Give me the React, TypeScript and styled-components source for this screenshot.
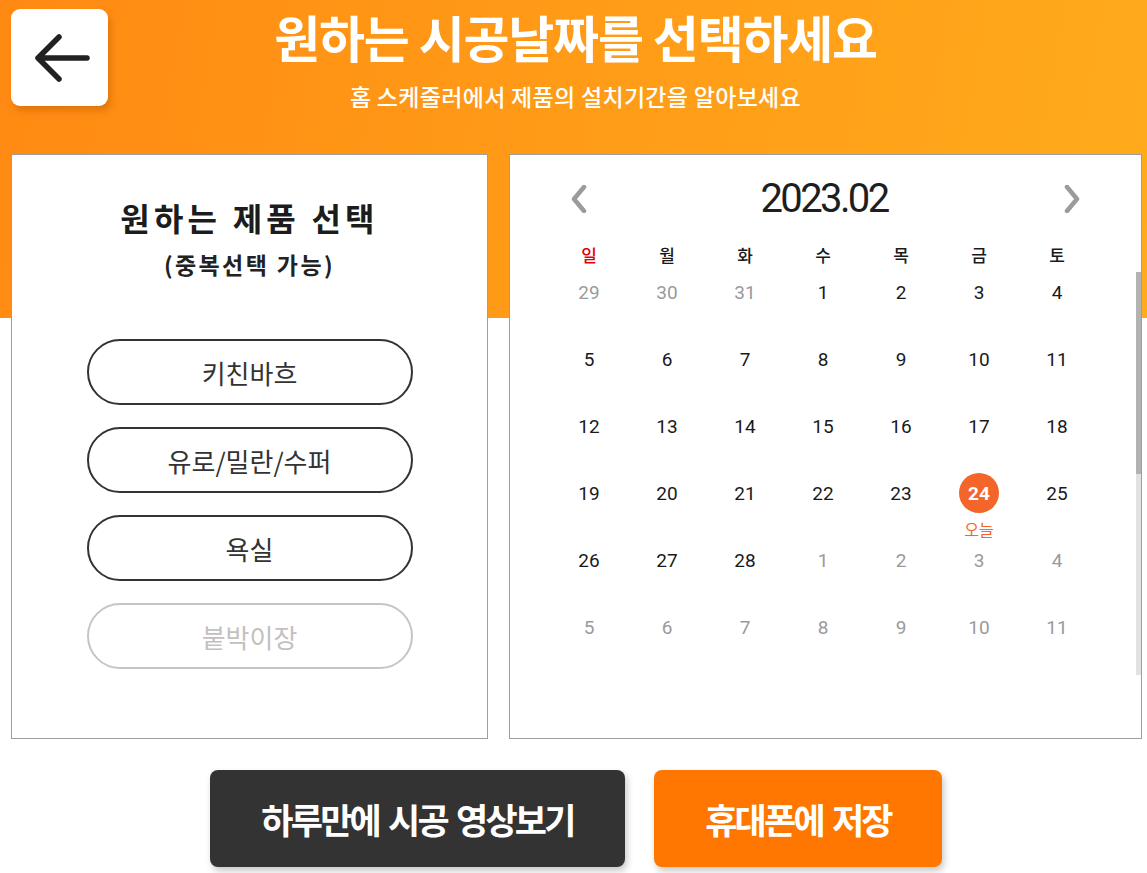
import React from "react";
import styled, { createGlobalStyle } from "styled-components";

const Global = createGlobalStyle`
  html, body { margin: 0; padding: 0; background: #fff; }
  body { font-family: "Noto Sans CJK KR", "Noto Sans", sans-serif; }
  * { box-sizing: border-box; }
`;

const Page = styled.div`
  width: 1147px;
  height: 873px;
  overflow: hidden;
  padding: 0 7px 0 11px;
  background: linear-gradient(100deg, #ff8a13 0%, #ff9a17 45%, #ffab1c 100%) top left / 100% 318px no-repeat, #fff;
  display: flex;
  flex-direction: column;
`;

const Header = styled.header`
  display: grid;
  grid-template-columns: 97px 1fr 97px;
  height: 154px;
  align-items: start;
`;

const BackButton = styled.button`
  margin-top: 9px;
  width: 97px;
  height: 97px;
  border: none;
  border-radius: 9px;
  background: #fff;
  box-shadow: 3px 5px 7px rgba(190, 90, 0, 0.45);
  display: flex;
  align-items: center;
  justify-content: center;
  padding: 0;
  cursor: pointer;
`;

const Titles = styled.div`
  display: flex;
  flex-direction: column;
  align-items: center;
  color: #fff;
`;

const Title = styled.h1`
  margin: 0;
  font-size: 50px;
  line-height: 72px;
  font-weight: 700;
  letter-spacing: -1.2px;
  white-space: nowrap;
`;

const Subtitle = styled.p`
  margin: 9px 0 0;
  font-size: 23px;
  line-height: 30px;
  font-weight: 500;
  letter-spacing: 0.3px;
`;

const Panels = styled.div`
  display: grid;
  grid-template-columns: 477px 633px;
  gap: 21px;
  height: 585px;
`;

const Panel = styled.section`
  position: relative;
  background: #fff;
  border: 1px solid #9e9e9e;
  display: flex;
  flex-direction: column;
  align-items: center;
  overflow: hidden;
`;

const ProductPanel = styled(Panel)`
  padding-top: 40px;
`;

const PanelTitle = styled.h2`
  margin: 0;
  font-size: 32px;
  line-height: 44px;
  font-weight: 700;
  letter-spacing: 4.2px;
  color: #1c1c1c;
`;

const PanelNote = styled.p`
  margin: 10px 0 0;
  font-size: 23px;
  line-height: 30px;
  font-weight: 700;
  letter-spacing: 2.4px;
  color: #222;
`;

const ProductList = styled.div`
  margin-top: 60px;
  display: flex;
  flex-direction: column;
  gap: 22px;
`;

const ProductButton = styled.button<{ $disabled?: boolean }>`
  width: 326px;
  height: 66px;
  border-radius: 33px;
  border: 2px solid ${(p) => (p.$disabled ? "#c9c4c4" : "#333")};
  background: #fff;
  color: ${(p) => (p.$disabled ? "#c4c0c0" : "#333")};
  font-family: "Noto Sans CJK KR", sans-serif;
  font-size: 26px;
  font-weight: 400;
  padding: 0;
  cursor: pointer;
`;

const CalendarPanel = styled(Panel)`
  padding-top: 20px;
  align-items: stretch;
`;

const CalHeader = styled.div`
  height: 48px;
  display: flex;
  align-items: center;
  justify-content: space-between;
  padding: 0 60px;
`;

const NavButton = styled.button`
  width: 18px;
  height: 30px;
  border: none;
  background: none;
  padding: 0;
  display: flex;
  align-items: center;
  justify-content: center;
  cursor: pointer;
`;

const MonthLabel = styled.div`
  font-family: Roboto, "Noto Sans CJK KR", sans-serif;
  font-size: 40px;
  line-height: 48px;
  font-weight: 400;
  letter-spacing: -2.6px;
  color: #1e1e1e;
  margin-right: 3px;
`;

const WeekRow = styled.div`
  margin-top: 13px;
  height: 36px;
  display: grid;
  grid-template-columns: repeat(7, 78px);
  justify-content: center;
  padding-right: 5px;
`;

const WeekDay = styled.div<{ $sun?: boolean }>`
  display: flex;
  align-items: center;
  justify-content: center;
  font-size: 17px;
  font-weight: 500;
  color: ${(p) => (p.$sun ? "#e0000b" : "#1a1a1a")};
`;

const DaysArea = styled.div`
  height: 403px;
  overflow: hidden;
`;

const DaysGrid = styled.div`
  display: grid;
  grid-template-columns: repeat(7, 78px);
  grid-auto-rows: 67px;
  justify-content: center;
  padding-right: 5px;
`;

const ScrollTrack = styled.div`
  position: absolute;
  top: 117px;
  right: 0;
  width: 5px;
  height: 403px;
  background: #e2e2e2;
`;

const ScrollThumb = styled.div`
  width: 100%;
  height: 50%;
  background: #b3b3b3;
`;

const DayCell = styled.div`
  display: flex;
  flex-direction: column;
  align-items: center;
`;

const DayNum = styled.div<{ $muted?: boolean; $today?: boolean }>`
  width: 40px;
  height: 40px;
  border-radius: 50%;
  display: flex;
  align-items: center;
  justify-content: center;
  font-family: Roboto, "Noto Sans CJK KR", sans-serif;
  font-size: 19px;
  font-weight: ${(p) => (p.$today ? 700 : 400)};
  color: ${(p) => (p.$today ? "#fff" : p.$muted ? "#9a9a9a" : "#1a1a1a")};
  background: ${(p) => (p.$today ? "#f4652a" : "transparent")};
`;

const TodayLabel = styled.div`
  margin-top: 6px;
  font-size: 16px;
  line-height: 20px;
  color: #f4652a;
`;

const Actions = styled.div`
  margin-top: 31px;
  display: flex;
  justify-content: center;
  gap: 29px;
  padding-left: 1px;
`;

const ActionButton = styled.button<{ $w: number; $bg: string }>`
  width: ${(p) => p.$w}px;
  height: 97px;
  border: none;
  border-radius: 8px;
  background: ${(p) => p.$bg};
  color: #fff;
  font-family: "Noto Sans CJK KR", sans-serif;
  font-size: 35px;
  font-weight: 700;
  letter-spacing: -2.8px;
  word-spacing: 4px;
  box-shadow: 2px 4px 7px rgba(0, 0, 0, 0.22);
  cursor: pointer;
  padding: 0;
`;

type Day = { n: number; muted?: boolean; today?: boolean };

const days: Day[] = [
  { n: 29, muted: true }, { n: 30, muted: true }, { n: 31, muted: true },
  ...Array.from({ length: 28 }, (_, i) => ({ n: i + 1, today: i + 1 === 24 })),
  { n: 1, muted: true }, { n: 2, muted: true }, { n: 3, muted: true }, { n: 4, muted: true },
  { n: 5, muted: true }, { n: 6, muted: true }, { n: 7, muted: true }, { n: 8, muted: true },
  { n: 9, muted: true }, { n: 10, muted: true }, { n: 11, muted: true },
];

const weekDays = ["일", "월", "화", "수", "목", "금", "토"];

const Chevron = ({ dir }: { dir: "left" | "right" }) => (
  <svg width="16" height="28" viewBox="0 0 16 28">
    <path
      d={dir === "left" ? "M13 2 L3 14 L13 26" : "M3 2 L13 14 L3 26"}
      fill="none"
      stroke="#9b9b9b"
      strokeWidth="4.5"
      strokeLinecap="round"
      strokeLinejoin="round"
    />
  </svg>
);

export default function App() {
  return (
    <>
      <Global />
      <Page>
        <Header>
          <BackButton aria-label="뒤로">
            <svg width="60" height="50" viewBox="0 0 60 50">
              <path
                d="M8 25 H57 M8 25 L29 4 M8 25 L29 46"
                fill="none"
                stroke="#222"
                strokeWidth="5.5"
                strokeLinecap="round"
                strokeLinejoin="round"
              />
            </svg>
          </BackButton>
          <Titles>
            <Title>원하는 시공날짜를 선택하세요</Title>
            <Subtitle>홈 스케줄러에서 제품의 설치기간을 알아보세요</Subtitle>
          </Titles>
          <div />
        </Header>
        <Panels>
          <ProductPanel>
            <PanelTitle>원하는 제품 선택</PanelTitle>
            <PanelNote>(중복선택 가능)</PanelNote>
            <ProductList>
              <ProductButton>키친바흐</ProductButton>
              <ProductButton>유로/밀란/수퍼</ProductButton>
              <ProductButton>욕실</ProductButton>
              <ProductButton $disabled>붙박이장</ProductButton>
            </ProductList>
          </ProductPanel>
          <CalendarPanel>
            <CalHeader>
              <NavButton aria-label="이전 달"><Chevron dir="left" /></NavButton>
              <MonthLabel>2023.02</MonthLabel>
              <NavButton aria-label="다음 달"><Chevron dir="right" /></NavButton>
            </CalHeader>
            <WeekRow>
              {weekDays.map((d, i) => (
                <WeekDay key={d} $sun={i === 0}>{d}</WeekDay>
              ))}
            </WeekRow>
            <DaysArea>
              <DaysGrid>
                {days.map((d, i) => (
                  <DayCell key={i}>
                    <DayNum $muted={d.muted} $today={d.today}>{d.n}</DayNum>
                    {d.today && <TodayLabel>오늘</TodayLabel>}
                  </DayCell>
                ))}
              </DaysGrid>
            </DaysArea>
            <ScrollTrack>
              <ScrollThumb />
            </ScrollTrack>
          </CalendarPanel>
        </Panels>
        <Actions>
          <ActionButton $w={415} $bg="#333333">하루만에 시공 영상보기</ActionButton>
          <ActionButton $w={288} $bg="#ff7700">휴대폰에 저장</ActionButton>
        </Actions>
      </Page>
    </>
  );
}
